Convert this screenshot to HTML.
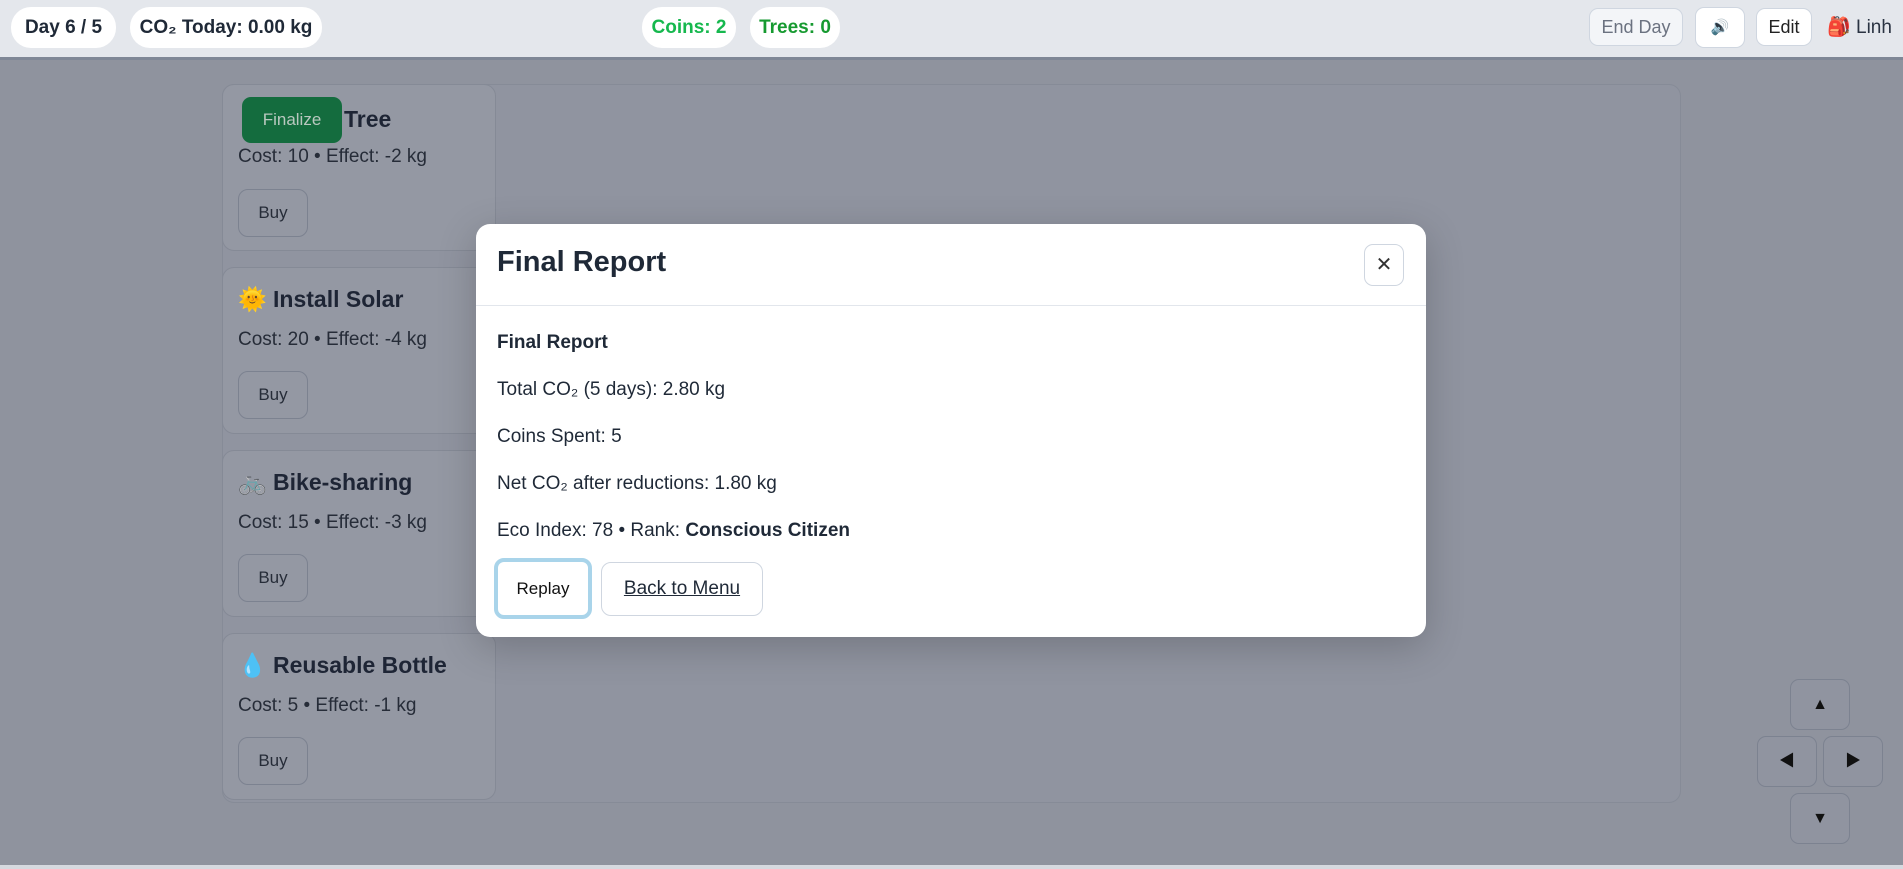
<!DOCTYPE html>
<html><head><meta charset="utf-8"><style>
*{box-sizing:border-box;margin:0;padding:0}
body{width:1903px;height:869px;overflow:hidden;position:relative;background:#8f939e;font-family:"Liberation Sans","Noto Sans CJK SC",sans-serif;color:#1f2937}
.top{position:absolute;left:0;top:0;width:1903px;height:60px;background:#e4e7ec;border-bottom:3px solid #7f8796}
.pill{position:absolute;top:7px;height:41px;background:#fff;border-radius:20px;font-size:19px;font-weight:bold;line-height:41px;text-align:center;color:#1f2937}
.btn{position:absolute;background:#fff;border:1px solid #cfd6e0;border-radius:9px;text-align:center;font-size:18px}
.panel{position:absolute;left:222px;top:84px;width:1459px;height:719px;border:1px solid #868b97;border-radius:12px;background:#9094a0}
.card{position:absolute;left:222px;width:274px;border:1px solid #858a96;border-radius:12px;background:#9498a3}
.card h3{position:absolute;left:15px;font-size:23px;font-weight:bold;color:#1e2535}
.card p{position:absolute;left:15px;font-size:19px;color:#262c38}
.buy{position:absolute;left:15px;width:70px;height:48px;border:1px solid #7c8290;border-radius:10px;font-size:17px;line-height:46px;text-align:center;color:#262c38}
.modal{position:absolute;left:476px;top:224px;width:950px;height:413px;background:#fff;border-radius:14px;box-shadow:0 10px 40px rgba(0,0,0,.2)}
.modal .line{position:absolute;left:21px;font-size:19px;color:#1f2937}
.arr{position:absolute;width:60px;height:51px;border:1px solid #7c8290;border-radius:9px;background:#9094a0;font-size:16px;text-align:center;line-height:49px;color:#111}
</style></head><body>
<div class="top"></div>
<div class="pill" style="left:11px;width:105px">Day 6 / 5</div>
<div class="pill" style="left:130px;width:192px">CO₂ Today: 0.00 kg</div>
<div class="pill" style="left:642px;width:94px;color:#16b84e">Coins: 2</div>
<div class="pill" style="left:750px;width:90px;color:#169a30">Trees: 0</div>
<div class="btn" style="left:1589px;top:8px;width:94px;height:38px;line-height:36px;background:#f3f5f8;color:#6b7280">End Day</div>
<div class="btn" style="left:1695px;top:7px;width:50px;height:41px;line-height:39px;font-size:15px;color:#3b82f6">🔊</div>
<div class="btn" style="left:1756px;top:8px;width:56px;height:38px;line-height:36px;color:#222">Edit</div>
<div style="position:absolute;left:1827px;top:15px;font-size:19px">🎒</div>
<div style="position:absolute;left:1856px;top:17px;font-size:19px;color:#2a3342">Linh</div>

<div class="panel"></div>
<div class="card" style="top:84px;height:167px"><h3 style="top:21px;left:121px">Tree</h3><p style="top:61px">Cost: 10 • Effect: -2 kg</p><div class="buy" style="top:104px">Buy</div></div>
<div style="position:absolute;left:242px;top:97px;width:100px;height:46px;background:#146c3e;border-radius:9px;color:#b9c8bf;font-size:17px;line-height:46px;text-align:center">Finalize</div>
<div class="card" style="top:267px;height:167px"><h3 style="top:18px">🌞 Install Solar</h3><p style="top:61px">Cost: 20 • Effect: -4 kg</p><div class="buy" style="top:103px">Buy</div></div>
<div class="card" style="top:450px;height:167px"><h3 style="top:18px">🚲 Bike-sharing</h3><p style="top:61px">Cost: 15 • Effect: -3 kg</p><div class="buy" style="top:103px">Buy</div></div>
<div class="card" style="top:633px;height:167px"><h3 style="top:18px">💧 Reusable Bottle</h3><p style="top:61px">Cost: 5 • Effect: -1 kg</p><div class="buy" style="top:103px">Buy</div></div>

<div class="arr" style="left:1790px;top:679px">▲</div>
<div class="arr" style="left:1757px;top:736px">◀</div>
<div class="arr" style="left:1823px;top:736px">▶</div>
<div class="arr" style="left:1790px;top:793px">▼</div>
<div style="position:absolute;left:0;top:865px;width:1903px;height:4px;background:#d6d9df"></div>

<div class="modal">
 <div style="position:absolute;left:21px;top:22px;font-size:29px;font-weight:bold;color:#1f2937">Final Report</div>
 <div style="position:absolute;left:888px;top:20px;width:40px;height:42px;border:1px solid #cfd6e0;border-radius:9px;text-align:center;line-height:40px;font-size:20px;color:#333">✕</div>
 <div style="position:absolute;left:0;top:81px;width:950px;height:1px;background:#e2e6ec"></div>
 <div class="line" style="top:108px;font-weight:bold">Final Report</div>
 <div class="line" style="top:155px">Total CO₂ (5 days): 2.80 kg</div>
 <div class="line" style="top:202px">Coins Spent: 5</div>
 <div class="line" style="top:249px">Net CO₂ after reductions: 1.80 kg</div>
 <div class="line" style="top:296px">Eco Index: 78 • Rank: <b>Conscious Citizen</b></div>
 <div style="position:absolute;left:18px;top:334px;width:98px;height:61px;border:4px solid #a9d4ea;border-radius:10px;text-align:center;line-height:53px;font-size:17px;color:#111">Replay</div>
 <div style="position:absolute;left:125px;top:338px;width:162px;height:54px;border:1px solid #cfd6e0;border-radius:10px;text-align:center;line-height:52px;font-size:19px;color:#1f2937;text-decoration:underline">Back to Menu</div>
</div>
</body></html>
